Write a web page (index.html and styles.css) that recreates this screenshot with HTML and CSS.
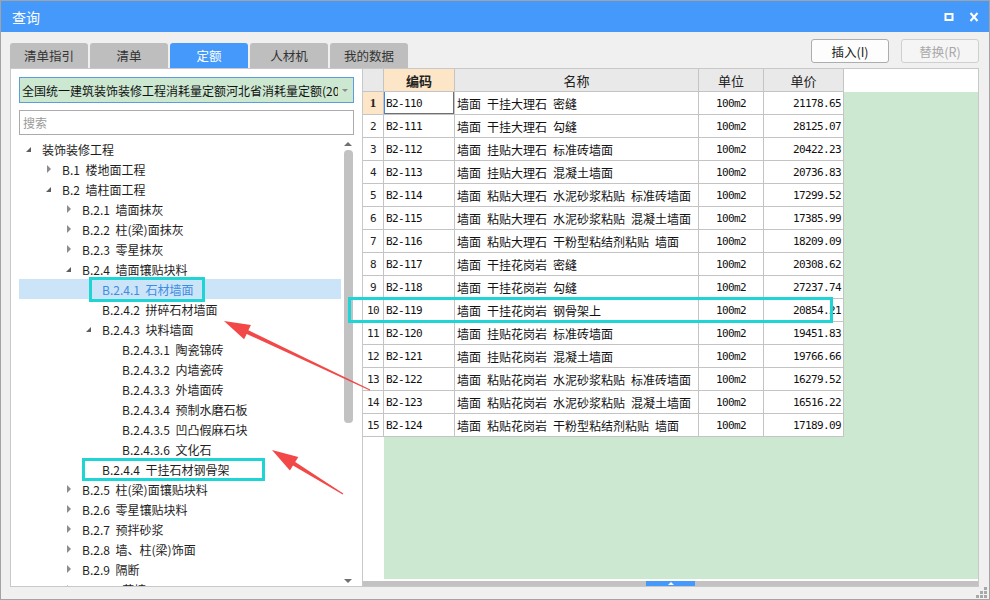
FILE: index.html
```html
<!DOCTYPE html>
<html lang="zh-CN">
<head>
<meta charset="utf-8">
<title>查询</title>
<link rel="stylesheet" href="styles.css">
</head>
<body>
<div class="window">
  <div class="titlebar">
    <span class="title">查询</span>
    <div class="ctrls">
      <svg width="10" height="10" viewBox="0 0 10 10"><rect x="1.5" y="2" width="7" height="6" fill="none" stroke="#fff" stroke-width="2"/></svg>
      <svg width="10" height="10" viewBox="0 0 10 10"><path d="M1.5 1L8.5 9M8.5 1L1.5 9" stroke="#fff" stroke-width="2"/></svg>
    </div>
  </div>
  <div class="toolbar">
    <div class="tabs">
      <div class="tab">清单指引</div>
      <div class="tab">清单</div>
      <div class="tab active">定额</div>
      <div class="tab">人材机</div>
      <div class="tab">我的数据</div>
    </div>
    <div class="buttons">
      <div class="btn">插入(I)</div>
      <div class="btn disabled">替换(R)</div>
    </div>
  </div>
  <div class="main">
    <div class="left">
      <div class="combo"><span class="combo-text">全国统一建筑装饰装修工程消耗量定额河北省消耗量定额(2012)</span><span class="combo-arrow"></span></div>
      <div class="search">搜索</div>
      <div class="treewrap">
        <div class="tree">
          <div class="row l0"><span class="tg exp"></span><span>装饰装修工程</span></div>
          <div class="row l1"><span class="tg col"></span><span>B.1 楼地面工程</span></div>
          <div class="row l1"><span class="tg exp"></span><span>B.2 墙柱面工程</span></div>
          <div class="row l2"><span class="tg col"></span><span>B.2.1 墙面抹灰</span></div>
          <div class="row l2"><span class="tg col"></span><span>B.2.2 柱(梁)面抹灰</span></div>
          <div class="row l2"><span class="tg col"></span><span>B.2.3 零星抹灰</span></div>
          <div class="row l2"><span class="tg exp"></span><span>B.2.4 墙面镶贴块料</span></div>
          <div class="row l3 sel"><span class="tg"></span><span>B.2.4.1 石材墙面</span></div>
          <div class="row l3"><span class="tg"></span><span>B.2.4.2 拼碎石材墙面</span></div>
          <div class="row l3"><span class="tg exp"></span><span>B.2.4.3 块料墙面</span></div>
          <div class="row l4"><span class="tg"></span><span>B.2.4.3.1 陶瓷锦砖</span></div>
          <div class="row l4"><span class="tg"></span><span>B.2.4.3.2 内墙瓷砖</span></div>
          <div class="row l4"><span class="tg"></span><span>B.2.4.3.3 外墙面砖</span></div>
          <div class="row l4"><span class="tg"></span><span>B.2.4.3.4 预制水磨石板</span></div>
          <div class="row l4"><span class="tg"></span><span>B.2.4.3.5 凹凸假麻石块</span></div>
          <div class="row l4"><span class="tg"></span><span>B.2.4.3.6 文化石</span></div>
          <div class="row l3"><span class="tg"></span><span>B.2.4.4 干挂石材钢骨架</span></div>
          <div class="row l2"><span class="tg col"></span><span>B.2.5 柱(梁)面镶贴块料</span></div>
          <div class="row l2"><span class="tg col"></span><span>B.2.6 零星镶贴块料</span></div>
          <div class="row l2"><span class="tg col"></span><span>B.2.7 预拌砂浆</span></div>
          <div class="row l2"><span class="tg col"></span><span>B.2.8 墙、柱(梁)饰面</span></div>
          <div class="row l2"><span class="tg col"></span><span>B.2.9 隔断</span></div>
          <div class="row l2"><span class="tg col"></span><span>B.2.10 幕墙</span></div>
        </div>
        <div class="vscroll">
          <div class="vbtn"><span class="up"></span></div>
          <div class="vthumb"></div>
          <div class="vspace"></div>
          <div class="vbtn"><span class="down"></span></div>
        </div>
      </div>
    </div>
    <div class="right">
      <div class="ghead">
        <div class="hc num"></div>
        <div class="hc c1 cur">编码</div>
        <div class="hc c2">名称</div>
        <div class="hc c3">单位</div>
        <div class="hc c4">单价</div>
        <div class="hfill"></div>
      </div>
      <div class="gbody">
        <div class="nums">
          <div class="nc cur">1</div>
          <div class="nc">2</div>
          <div class="nc">3</div>
          <div class="nc">4</div>
          <div class="nc">5</div>
          <div class="nc">6</div>
          <div class="nc">7</div>
          <div class="nc">8</div>
          <div class="nc">9</div>
          <div class="nc">10</div>
          <div class="nc">11</div>
          <div class="nc">12</div>
          <div class="nc">13</div>
          <div class="nc">14</div>
          <div class="nc">15</div>
        </div>
        <div class="data">
          <div class="dr"><div class="dc code focus">B2-110</div><div class="dc name">墙面 干挂大理石 密缝</div><div class="dc unit">100m2</div><div class="dc price">21178.65</div></div>
          <div class="dr"><div class="dc code">B2-111</div><div class="dc name">墙面 干挂大理石 勾缝</div><div class="dc unit">100m2</div><div class="dc price">28125.07</div></div>
          <div class="dr"><div class="dc code">B2-112</div><div class="dc name">墙面 挂贴大理石 标准砖墙面</div><div class="dc unit">100m2</div><div class="dc price">20422.23</div></div>
          <div class="dr"><div class="dc code">B2-113</div><div class="dc name">墙面 挂贴大理石 混凝土墙面</div><div class="dc unit">100m2</div><div class="dc price">20736.83</div></div>
          <div class="dr"><div class="dc code">B2-114</div><div class="dc name">墙面 粘贴大理石 水泥砂浆粘贴 标准砖墙面</div><div class="dc unit">100m2</div><div class="dc price">17299.52</div></div>
          <div class="dr"><div class="dc code">B2-115</div><div class="dc name">墙面 粘贴大理石 水泥砂浆粘贴 混凝土墙面</div><div class="dc unit">100m2</div><div class="dc price">17385.99</div></div>
          <div class="dr"><div class="dc code">B2-116</div><div class="dc name">墙面 粘贴大理石 干粉型粘结剂粘贴 墙面</div><div class="dc unit">100m2</div><div class="dc price">18209.09</div></div>
          <div class="dr"><div class="dc code">B2-117</div><div class="dc name">墙面 干挂花岗岩 密缝</div><div class="dc unit">100m2</div><div class="dc price">20308.62</div></div>
          <div class="dr"><div class="dc code">B2-118</div><div class="dc name">墙面 干挂花岗岩 勾缝</div><div class="dc unit">100m2</div><div class="dc price">27237.74</div></div>
          <div class="dr"><div class="dc code">B2-119</div><div class="dc name">墙面 干挂花岗岩 钢骨架上</div><div class="dc unit">100m2</div><div class="dc price">20854.21</div></div>
          <div class="dr"><div class="dc code">B2-120</div><div class="dc name">墙面 挂贴花岗岩 标准砖墙面</div><div class="dc unit">100m2</div><div class="dc price">19451.83</div></div>
          <div class="dr"><div class="dc code">B2-121</div><div class="dc name">墙面 挂贴花岗岩 混凝土墙面</div><div class="dc unit">100m2</div><div class="dc price">19766.66</div></div>
          <div class="dr"><div class="dc code">B2-122</div><div class="dc name">墙面 粘贴花岗岩 水泥砂浆粘贴 标准砖墙面</div><div class="dc unit">100m2</div><div class="dc price">16279.52</div></div>
          <div class="dr"><div class="dc code">B2-123</div><div class="dc name">墙面 粘贴花岗岩 水泥砂浆粘贴 混凝土墙面</div><div class="dc unit">100m2</div><div class="dc price">16516.22</div></div>
          <div class="dr"><div class="dc code">B2-124</div><div class="dc name">墙面 粘贴花岗岩 干粉型粘结剂粘贴 墙面</div><div class="dc unit">100m2</div><div class="dc price">17189.09</div></div>
        </div>
      </div>
      <div class="hgap"></div>
      <div class="hscroll"><div class="hthumb"><span class="hup"></span></div></div>
    </div>
  </div>
  <div class="bottom">
    <svg class="grip" width="12" height="12" viewBox="0 0 12 12" fill="#a8a8a8">
      <rect x="8" y="0" width="3" height="3"/>
      <rect x="4" y="4" width="3" height="3"/><rect x="8" y="4" width="3" height="3"/>
      <rect x="0" y="8" width="3" height="3"/><rect x="4" y="8" width="3" height="3"/><rect x="8" y="8" width="3" height="3"/>
    </svg>
  </div>
  <svg class="annot" width="990" height="600" viewBox="0 0 990 600">
    <rect x="90.5" y="278.5" width="113" height="22" fill="none" stroke="#1fd4d4" stroke-width="3"/>
    <rect x="83.5" y="459.5" width="180" height="20" fill="none" stroke="#1fd4d4" stroke-width="3"/>
    <rect x="349.5" y="298.5" width="482" height="23" fill="none" stroke="#1fd4d4" stroke-width="3"/>
    <polygon fill="#f24848" points="224,321 250.9,324.9 248.4,330.3 370.2,389.6 369.8,390.4 246.7,333.9 244.1,339.3"/>
    <polygon fill="#f24848" points="272,450 298.3,456.9 295.2,462.0 343.3,493.6 342.7,494.4 293.0,465.4 289.9,470.5"/>
  </svg>
</div>
</body>
</html>
```

FILE: styles.css
```css
* { box-sizing: border-box; }
html, body { margin: 0; padding: 0; }
body {
  width: 990px;
  height: 600px;
  overflow: hidden;
  background: #ffffff;
  font-family: "Noto Sans CJK SC", "Microsoft YaHei", sans-serif;
  color: #222;
}
.window {
  position: relative;
  width: 990px;
  height: 600px;
  border: 1px solid #a3a3a3;
  background: #f0f0f0;
  display: flex;
  flex-direction: column;
}
.titlebar {
  flex: none;
  height: 31px;
  background: #4499fb;
  color: #fff;
  display: flex;
  align-items: center;
  justify-content: space-between;
  padding: 0 10px 0 11px;
}
.title { font-size: 14px; line-height: 1; }
.ctrls { display: flex; align-items: center; gap: 15px; }
.ctrls svg { display: block; }

.toolbar {
  flex: none;
  height: 36px;
  display: flex;
  justify-content: space-between;
  padding: 0 10px 0 9px;
}
.tabs { display: flex; gap: 2px; align-self: flex-end; }
.tab {
  width: 78px;
  height: 25px;
  background: #bebebe;
  border-radius: 3px 3px 0 0;
  font-size: 12.5px;
  color: #333;
  display: flex;
  align-items: center;
  justify-content: center;
}
.tab.active { background: #4499fb; color: #fff; }
.buttons { display: flex; gap: 12px; padding-top: 7px; }
.btn {
  width: 78px;
  height: 24px;
  border: 1px solid #adadad;
  border-radius: 3px;
  background: #fdfdfd;
  font-size: 12.5px;
  color: #222;
  display: flex;
  align-items: center;
  justify-content: center;
}
.btn.disabled { border-color: #cfcfcf; color: #a8a8a8; background: #f5f5f5; }

.main {
  flex: none;
  height: 519px;
  display: flex;
  padding: 0 10px 0 9px;
}
.left {
  width: 352px;
  flex: none;
  background: #fff;
  border: 1px solid #c8c8c8;
  border-right: none;
  padding: 8px 0 0 8px;
  display: flex;
  flex-direction: column;
}
.combo {
  width: 335px;
  height: 26px;
  flex: none;
  background: #cde8d1;
  border: 1px solid #5c9de0;
  display: flex;
  align-items: center;
  padding: 0 0 0 2px;
  font-size: 12px;
  color: #111;
  overflow: hidden;
}
.combo-text { flex: 1; white-space: nowrap; overflow: hidden; }
.combo-arrow {
  flex: none;
  width: 0; height: 0;
  margin: 0 5px 0 4px;
  border-left: 3px solid transparent;
  border-right: 3px solid transparent;
  border-top: 3px solid #8a8a8a;
}
.search {
  width: 335px;
  height: 25px;
  flex: none;
  margin-top: 7px;
  border: 1px solid #ababab;
  font-size: 12px;
  color: #9a9a9a;
  padding-left: 3px;
  line-height: 23px;
}
.treewrap {
  margin-top: 4px;
  flex: 1;
  display: flex;
  overflow: hidden;
}
.tree { width: 322px; flex: none; overflow: hidden; }
.row {
  height: 20px;
  display: flex;
  align-items: center;
  white-space: nowrap;
  font-size: 12px;
  word-spacing: 3px;
  color: #1e1e1e;
}
.row.l0 { padding-left: 7px; }
.row.l1 { padding-left: 27px; }
.row.l2 { padding-left: 47px; }
.row.l3 { padding-left: 67px; }
.row.l4 { padding-left: 87px; }
.row.sel { background: #cce4f7; color: #3b8de6; }
.tg { width: 16px; height: 20px; flex: none; position: relative; }
.tg.col::before {
  content: "";
  position: absolute;
  left: 1px; top: 6px;
  border-left: 4px solid #8c8c8c;
  border-top: 4px solid transparent;
  border-bottom: 4px solid transparent;
}
.tg.exp::before {
  content: "";
  position: absolute;
  left: 0px; top: 8px;
  border-right: 5px solid #5d5d5d;
  border-top: 5px solid transparent;
}
.vscroll {
  width: 10px;
  margin-left: 2px;
  flex: none;
  display: flex;
  flex-direction: column;
  align-items: center;
}
.vbtn { height: 10px; width: 10px; flex: none; display: flex; align-items: center; justify-content: center; }
.up { border-bottom: 4px solid #707070; border-left: 4px solid transparent; border-right: 4px solid transparent; }
.down { border-top: 4px solid #707070; border-left: 4px solid transparent; border-right: 4px solid transparent; }
.vthumb { width: 9px; height: 273px; margin-top: 1px; background: #c2c2c2; border-radius: 4px; flex: none; }
.vspace { flex: 1; }

.right {
  flex: 1;
  background: #fff;
  border: 1px solid #c8c8c8;
  display: flex;
  flex-direction: column;
}
.ghead { height: 23px; flex: none; display: flex; }
.hc {
  height: 23px;
  flex: none;
  background: #e9e9e9;
  border-right: 1px solid #c4c4c4;
  border-bottom: 1px solid #c4c4c4;
  font-size: 13px;
  color: #222;
  display: flex;
  align-items: center;
  justify-content: center;
}
.hc.cur { background: #fde5c7; font-weight: bold; }
.num, .nc { width: 21px; }
.c1, .code { width: 71px; }
.c2, .name { width: 244px; }
.c3, .unit { width: 65px; }
.c4, .price { width: 80px; }
.hfill { flex: 1; background: #fff; }

.gbody { flex: 1; display: flex; overflow: hidden; }
.nums { width: 21px; flex: none; background: #fff; }
.nc {
  height: 23px;
  border-right: 1px solid #c4c4c4;
  border-bottom: 1px solid #c4c4c4;
  font-family: "DejaVu Sans Mono", monospace;
  font-size: 11px;
  letter-spacing: -0.6px;
  color: #222;
  display: flex;
  align-items: center;
  justify-content: center;
}
.nc.cur { background: #fde5c7; font-family: "Liberation Serif", serif; font-weight: bold; font-size: 13px; letter-spacing: 0; }
.data { flex: 1; background: #cde8d1; }
.dr { display: flex; height: 23px; }
.dc {
  height: 23px;
  flex: none;
  background: #fff;
  border-right: 1px solid #c4c4c4;
  border-bottom: 1px solid #c4c4c4;
  display: flex;
  align-items: center;
  white-space: nowrap;
  overflow: hidden;
  color: #111;
}
.code, .unit, .price {
  font-family: "DejaVu Sans Mono", monospace;
  font-size: 11px;
  letter-spacing: -0.62px;
}
.code { padding-left: 2px; }
.name { font-size: 12px; padding-left: 2px; word-spacing: 3.3px; }
.unit { justify-content: center; }
.price { justify-content: flex-end; padding-right: 2px; }
.dc.focus { box-shadow: inset 1px 0 0 #3b8be8, inset -1px -1px 0 #6e6e6e; }
.hgap { height: 2px; flex: none; }
.hscroll { height: 5px; flex: none; background: #c2c2c2; padding-left: 283px; }
.hthumb { width: 49px; height: 5px; background: #4499fb; display: flex; align-items: center; justify-content: center; }
.hup { border-bottom: 3px solid #fff; border-left: 3px solid transparent; border-right: 3px solid transparent; }

.bottom { flex: 1; display: flex; justify-content: flex-end; align-items: flex-end; padding: 0 1px 0 0; }
.grip { display: block; }

.annot { position: absolute; left: -1px; top: -1px; pointer-events: none; }
```
